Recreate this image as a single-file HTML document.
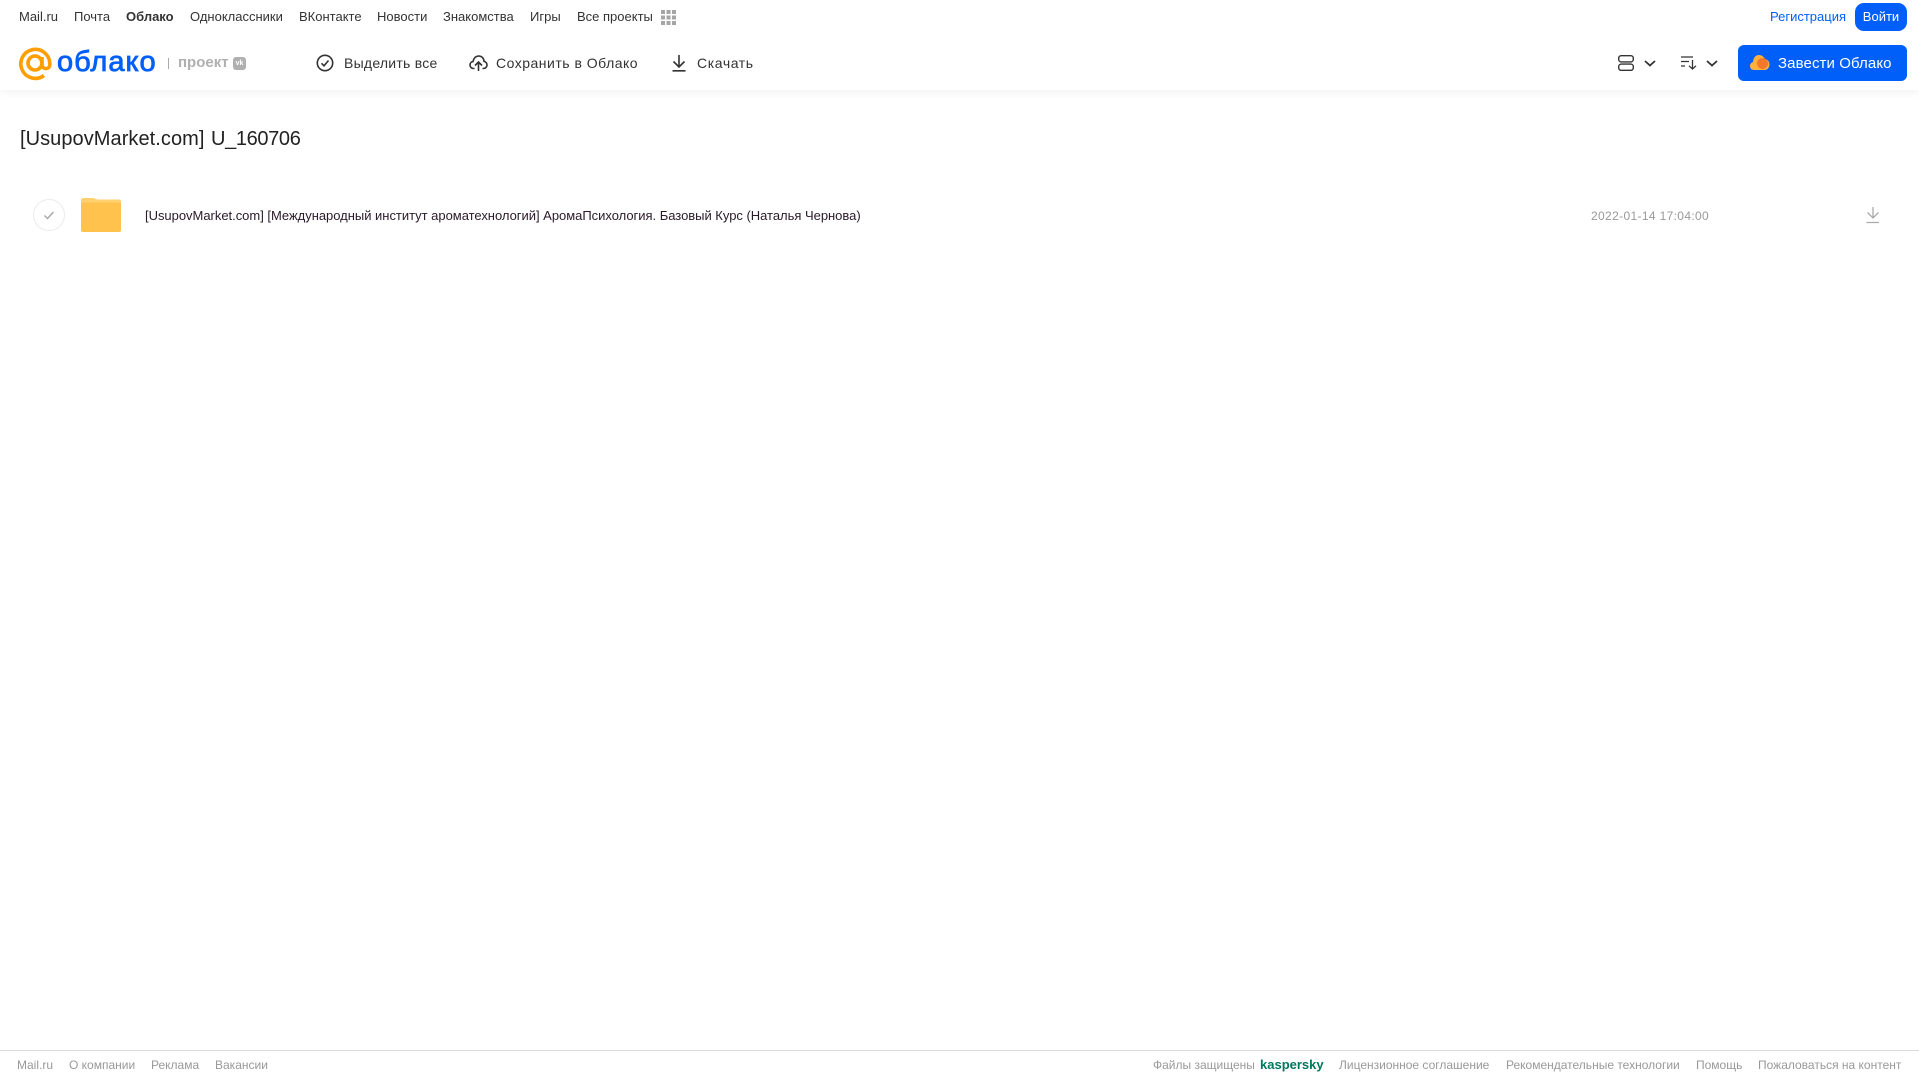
<!DOCTYPE html>
<html lang="ru"><head><meta charset="utf-8"><title>Облако</title>
<style>
html,body{margin:0;padding:0;background:#fff;width:1919px;height:1079px;overflow:hidden}
body{position:relative;font-family:"Liberation Sans",sans-serif;color:#333}
.t{position:absolute;white-space:nowrap;line-height:20px;height:20px}
.n{font-size:13px;top:7px;color:#333}
.b{font-size:14px;top:53px;color:#333}
.f{font-size:12px;top:1055px;color:#999}
svg{position:absolute;overflow:visible}
#hd{position:absolute;left:0;top:0;width:1919px;height:90px;background:#fff;box-shadow:0 2px 10px rgba(0,0,0,.06)}
</style></head><body>
<div id="hd"></div>
<span class="t n" style="left:19px">Mail.ru</span>
<span class="t n" style="left:74px">Почта</span>
<span class="t n" style="left:126px;font-weight:bold">Облако</span>
<span class="t n" style="left:190px">Одноклассники</span>
<span class="t n" style="left:299px">ВКонтакте</span>
<span class="t n" style="left:377px">Новости</span>
<span class="t n" style="left:443px">Знакомства</span>
<span class="t n" style="left:530px">Игры</span>
<span class="t n" style="left:577px">Все проекты</span>
<svg style="left:661px;top:10px" width="15" height="15" fill="#a5a5a5"><rect x="0" y="0" width="4" height="4"/><rect x="5.500" y="0" width="4" height="4"/><rect x="11" y="0" width="4" height="4"/><rect x="0" y="5.500" width="4" height="4"/><rect x="5.500" y="5.500" width="4" height="4"/><rect x="11" y="5.500" width="4" height="4"/><rect x="0" y="11" width="4" height="4"/><rect x="5.500" y="11" width="4" height="4"/><rect x="11" y="11" width="4" height="4"/></svg>
<span class="t n" style="left:1770px;color:#005ff9">Регистрация</span>
<div style="position:absolute;left:1855px;top:3px;width:52px;height:28px;border-radius:9px;background:#005ff9;color:#fff;font-size:13px;line-height:27px;text-align:center">Войти</div>

<svg style="left:19px;top:47px" width="33" height="33" viewBox="19 47 33 33" fill="none" stroke="#ff9e00" stroke-width="3.600"><circle cx="35" cy="63" r="7"/><path d="M44 75.500A14.500 14.500 0 1 1 49.800 63V64.500C49.800 70 42 70 42 64.500V57"/></svg>
<span class="t" style="left:57px;top:44px;height:36px;line-height:36px;font-size:29px;color:#005ff9;-webkit-text-stroke:.8px #005ff9;letter-spacing:1px">облако</span>
<div style="position:absolute;left:168px;top:58px;width:1px;height:11px;background:#aaa"></div>
<span class="t" style="left:178px;top:53px;font-size:15px;font-weight:bold;color:#b0b0b0">проект</span>
<div style="position:absolute;left:233px;top:57px;width:13px;height:13px;border-radius:3px;background:#b0b0b0;color:#fff;font-size:7px;font-weight:bold;line-height:13px;text-align:center">vk</div>

<svg style="left:316px;top:54px" width="18" height="18" fill="none" stroke="#333" stroke-width="1.600"><circle cx="9" cy="9" r="7.700"/><path d="M5.500 9.300 8 11.800 12.500 6.500"/></svg>
<span class="t b" style="left:344px;letter-spacing:.25px">Выделить все</span>
<svg style="left:469px;top:54px" width="19" height="18" fill="none" stroke="#333" stroke-width="1.600"><path d="M5.500 14.500H4.500C2.300 14.500 1 12.800 1 11 1 9.200 2.300 7.800 4 7.600 4.500 4.300 6.700 2 9.700 2 12.700 2 14.800 4.200 15 7.300 16.800 7.700 18 9.200 18 11 18 12.900 16.500 14.500 14.500 14.500H13.500"/><path d="M9.500 17V8.500M6 11.500 9.500 8 13 11.500"/></svg>
<span class="t b" style="left:496px;letter-spacing:.5px">Сохранить в Облако</span>
<svg style="left:672px;top:55px" width="14" height="17" fill="none" stroke="#333" stroke-width="1.600"><path d="M7 0V11.500M1.500 6.500 7 12 12.500 6.500M0.500 15.800H13.500"/></svg>
<span class="t b" style="left:697px;letter-spacing:.6px">Скачать</span>

<svg style="left:1618px;top:55px" width="16" height="16" fill="none" stroke="#333" stroke-width="1.400"><rect x=".7" y=".7" width="14.600" height="6.200" rx="2.500"/><rect x=".7" y="9.100" width="14.600" height="6.200" rx="2.500"/></svg>
<svg style="left:1644px;top:60px" width="12" height="7" fill="none" stroke="#333" stroke-width="1.800"><path d="M1 1 6 5.500 11 1"/></svg>
<svg style="left:1681px;top:56px" width="16" height="14" fill="none" stroke="#333" stroke-width="1.300"><path d="M0 1H12M0 5.500H8M0 10H4M11.500 4V13M8 9.800 11.500 13 15 9.800"/></svg>
<svg style="left:1706px;top:60px" width="12" height="7" fill="none" stroke="#333" stroke-width="1.800"><path d="M1 1 6 5.500 11 1"/></svg>

<div style="position:absolute;left:1738px;top:45px;width:169px;height:36px;border-radius:6px;background:#005ff9"></div>
<svg style="left:1750px;top:54px" width="20" height="17"><path d="M4 16C1.500 16 0 14.200 0 12 0 10 1.300 8.500 3 8 3.300 4 5.500 1 9 1 12 1 14 3 14.700 5 17.500 5.300 19.500 7.500 19.500 10.500 19.500 13.500 17.500 16 14.500 16Z" fill="#ffb13d"/><circle cx="12.500" cy="9.500" r="5.500" fill="#f5772b"/></svg>
<span class="t" style="left:1778px;top:54px;font-size:15px;color:#fff;letter-spacing:.1px">Завести Облако</span>

<span class="t" style="left:20px;top:127px;height:24px;line-height:24px;font-size:20px;color:#222"><span style="letter-spacing:.06px">[UsupovMarket.com]</span> <span style="letter-spacing:-.36px;margin-left:1px">U_160706</span></span>

<svg style="left:32px;top:198px" width="34" height="34" fill="none"><circle cx="17" cy="17" r="15.500" stroke="#ebebeb"/><path d="M12.500 17.500 15.500 20.500 21.500 14" stroke="#a5a5a5" stroke-width="1.300"/></svg>
<svg style="left:81px;top:198px" width="40" height="34"><path d="M2 0H12C14 0 15 1.500 17 1.500H38C39 1.500 40 2.500 40 4V10H0V2C0 1 1 0 2 0Z" fill="#ffd06e"/><path d="M2 4.500H38C39.200 4.500 40 5.300 40 6.500V32C40 33.200 39.200 34 38 34H2C.8 34 0 33.200 0 32V6.500C0 5.300.8 4.500 2 4.500Z" fill="#ffc24d"/></svg>
<span class="t" style="left:145px;top:206px;font-size:13px;color:#2a1a2a;letter-spacing:-.023px">[UsupovMarket.com] [Международный институт ароматехнологий] АромаПсихология. Базовый Курс (Наталья Чернова)</span>
<span class="t" style="left:1591px;top:206px;font-size:12px;color:#999;letter-spacing:.35px">2022-01-14 17:04:00</span>
<svg style="left:1866px;top:207px" width="14" height="17" fill="none" stroke="#aaa" stroke-width="1.300"><path d="M7 0V11M1.500 5.500 7 11 12.500 5.500M.5 15.500H13"/></svg>

<div style="position:absolute;left:0;top:1050px;width:1919px;height:1px;background:#ddd"></div>
<span class="t f" style="left:17px">Mail.ru</span>
<span class="t f" style="left:69px">О компании</span>
<span class="t f" style="left:151px">Реклама</span>
<span class="t f" style="left:215px">Вакансии</span>
<span class="t f" style="left:1153px">Файлы защищены</span>
<span class="t f" style="left:1260px;color:#00785f;font-weight:bold;font-size:13px">kaspersky</span>
<span class="t f" style="left:1339px">Лицензионное соглашение</span>
<span class="t f" style="left:1506px">Рекомендательные технологии</span>
<span class="t f" style="left:1696px">Помощь</span>
<span class="t f" style="left:1758px">Пожаловаться на контент</span>
</body></html>
